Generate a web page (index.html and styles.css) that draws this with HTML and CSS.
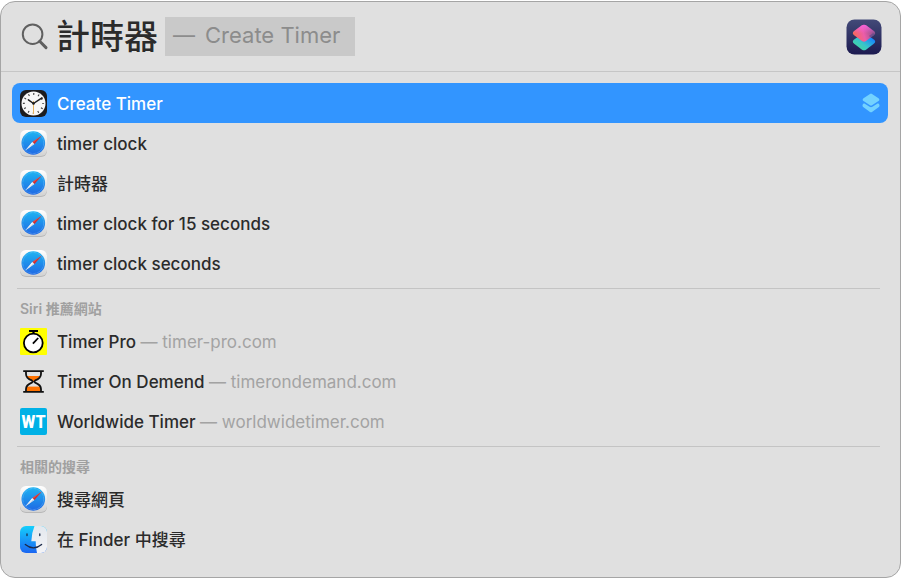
FILE: index.html
```html
<!DOCTYPE html>
<html lang="zh-Hant">
<head>
    <meta charset="UTF-8">
    <meta name="viewport" content="width=device-width, initial-scale=1.0">
    <title>Spotlight</title>
    <link rel="stylesheet" href="styles.css">
</head>
<body>
    <!-- Shared icons -->
    <svg class="sprite" aria-hidden="true">
        <defs>
            <linearGradient id="safari-bg" x1="0" y1="0" x2="0" y2="1">
                <stop offset="0" stop-color="#ffffff"/>
                <stop offset="1" stop-color="#d2d2d2"/>
            </linearGradient>
            <linearGradient id="safari-dial" x1="0" y1="0" x2="0" y2="1">
                <stop offset="0" stop-color="#1fb4f2"/>
                <stop offset="1" stop-color="#1f68e4"/>
            </linearGradient>
            <linearGradient id="finder-left" x1="0" y1="0" x2="0" y2="1">
                <stop offset="0" stop-color="#14cffc"/>
                <stop offset="1" stop-color="#1b66f2"/>
            </linearGradient>
            <linearGradient id="finder-right" x1="0" y1="0" x2="0" y2="1">
                <stop offset="0" stop-color="#e3e8ee"/>
                <stop offset="1" stop-color="#f3f3f6"/>
            </linearGradient>
            <linearGradient id="shortcut-bg" x1="0" y1="0" x2="0" y2="1">
                <stop offset="0" stop-color="#434a78"/>
                <stop offset="1" stop-color="#1c1a50"/>
            </linearGradient>
            <linearGradient id="shortcut-top" x1="0" y1="0.7" x2="1" y2="0.5">
                <stop offset="0" stop-color="#f96a50"/>
                <stop offset="0.5" stop-color="#ec5da8"/>
                <stop offset="1" stop-color="#84508c"/>
            </linearGradient>
            <linearGradient id="shortcut-shine" x1="0" y1="0" x2="0" y2="1">
                <stop offset="0" stop-color="#f562dc"/>
                <stop offset="0.5" stop-color="#f562dc" stop-opacity="0"/>
            </linearGradient>
            <linearGradient id="shortcut-bottom" x1="0.2" y1="1" x2="0.9" y2="0.3">
                <stop offset="0" stop-color="#44d99a"/>
                <stop offset="0.45" stop-color="#39c6c8"/>
                <stop offset="1" stop-color="#1482ff"/>
            </linearGradient>
            <clipPath id="finder-clip"><rect width="27" height="27" rx="6"/></clipPath>
        </defs>
        <symbol id="safari" viewBox="0 0 27 27">
            <rect y="1" width="27" height="26" rx="6" fill="#b8b8b8"/>
            <rect width="27" height="26" rx="6" fill="url(#safari-bg)"/>
            <circle cx="13.3" cy="13" r="11.8" fill="url(#safari-dial)"/>
            <circle cx="13.3" cy="13" r="10.5" fill="none" stroke="#a6daff" stroke-width="0.9" stroke-dasharray="0.6 0.75" opacity="0.6"/>
            <path d="M21.8 5.4 L12.2 11.9 L14.3 14.1 Z" fill="#f0463c"/>
            <path d="M5.2 20.6 L12.2 11.9 L14.3 14.1 Z" fill="#ffffff"/>
            <path d="M21.8 5.4 L13.3 13 L14.3 14.1 Z" fill="#c92d31"/>
            <path d="M5.2 20.6 L13.3 13 L14.3 14.1 Z" fill="#c9d6e6"/>
        </symbol>
    </svg>

    <main class="spotlight">
        <form class="search" role="search">
            <svg class="search-icon" viewBox="0 0 28 28" aria-hidden="true">
                <circle cx="11.6" cy="11.2" r="9.8" fill="none" stroke="#606060" stroke-width="2"/>
                <path d="M18.7 18.3 L25 24.6" stroke="#606060" stroke-width="3" stroke-linecap="round"/>
            </svg>
            <input class="search-input" type="text" value="計時器" aria-label="Spotlight" autocomplete="off">
            <span class="completion"><span>—</span><span>Create Timer</span></span>
            <svg class="app-icon" viewBox="0 0 36 36" aria-hidden="true">
                <rect x="0.5" y="0.5" width="35" height="35" rx="8" fill="url(#shortcut-bg)"/>
                <path d="M8.2 20.4 L16 15.1 Q18 13.8 20 15.1 L27.8 20.4 Q30.6 22.6 27.8 24.8 L20 30.7 Q18 32 16 30.7 L8.2 24.8 Q5.4 22.6 8.2 20.4 Z" fill="url(#shortcut-bottom)"/>
                <path d="M8.2 11.9 L16 6.3 Q18 5 20 6.3 L27.8 11.9 Q30.6 14 27.8 16.2 L20 22.1 Q18 23.4 16 22.1 L8.2 16.2 Q5.4 14 8.2 11.9 Z" fill="url(#shortcut-top)"/>
                <path d="M8.2 11.9 L16 6.3 Q18 5 20 6.3 L27.8 11.9 Q30.6 14 27.8 16.2 L20 22.1 Q18 23.4 16 22.1 L8.2 16.2 Q5.4 14 8.2 11.9 Z" fill="url(#shortcut-shine)"/>
                <path d="M22.9 17.1 L27 14.2 Q29.6 15 27.8 16.2 L25 18.4 Z" fill="#514988" opacity="0.6"/>
            </svg>
        </form>

        <div class="results">
            <ul class="list">
                <li>
                    <a class="row selected" href="#create-timer">
                        <svg class="icon" viewBox="0 0 27 27" aria-hidden="true">
                            <rect width="27" height="27" rx="6" fill="#1c1c1e"/>
                            <circle cx="13.5" cy="13.5" r="12" fill="#f7f7f7"/>
                            <circle cx="13.5" cy="13.5" r="9.6" fill="none" stroke="#3a3a3a" stroke-width="2" stroke-dasharray="1.1 3.926" stroke-dashoffset="0.55"/>
                            <path d="M13.5 11 V24" stroke="#e5b25f" stroke-width="1"/>
                            <path d="M13.5 13.5 L8.4 9.8 M13.5 13.5 L21.9 7.8" stroke="#1c1c1e" stroke-width="1.5" stroke-linecap="round"/>
                            <circle cx="13.5" cy="13.5" r="1.3" fill="#1c1c1e"/>
                        </svg>
                        <span class="name">Create Timer</span>
                        <svg class="layers" viewBox="0 0 18 20" aria-hidden="true">
                            <path d="M1.5 5.3 L8 0.9 Q9 0.2 10 0.9 L16.5 5.3 Q18.2 6.7 16.5 8 L10 12.3 Q9 13 8 12.3 L1.5 8 Q-0.2 6.7 1.5 5.3 Z"/>
                            <path d="M2 10.2 L7.6 13.8 Q9 14.6 10.4 13.8 L16 10.2 Q18.8 12.2 16.5 14.3 L10 18.9 Q9 19.7 8 18.9 L1.5 14.3 Q-0.8 12.2 2 10.2 Z"/>
                        </svg>
                    </a>
                </li>
                <li>
                    <a class="row" href="#timer-clock">
                        <svg class="icon" aria-hidden="true"><use href="#safari"/></svg>
                        <span class="name">timer clock</span>
                    </a>
                </li>
                <li>
                    <a class="row" href="#timer">
                        <svg class="icon" aria-hidden="true"><use href="#safari"/></svg>
                        <span class="name">計時器</span>
                    </a>
                </li>
                <li>
                    <a class="row" href="#timer-clock-15">
                        <svg class="icon" aria-hidden="true"><use href="#safari"/></svg>
                        <span class="name">timer clock for 15 seconds</span>
                    </a>
                </li>
                <li>
                    <a class="row" href="#timer-clock-seconds">
                        <svg class="icon" aria-hidden="true"><use href="#safari"/></svg>
                        <span class="name">timer clock seconds</span>
                    </a>
                </li>
            </ul>

            <h2 class="section-title">Siri 推薦網站</h2>
            <ul class="list">
                <li>
                    <a class="row" href="#timer-pro">
                        <svg class="icon" viewBox="0 0 27 27" aria-hidden="true">
                            <rect width="27" height="27" rx="1" fill="#ffff00"/>
                            <path d="M9 3 H18 M13.5 3 V6" stroke="#000000" stroke-width="2.2"/>
                            <circle cx="13.3" cy="15" r="9.4" fill="#ffffff" stroke="#000000" stroke-width="1.8"/>
                            <path d="M12.9 15.6 L18.2 10" stroke="#000000" stroke-width="1.8"/>
                        </svg>
                        <span class="name">Timer Pro <span class="site">— timer-pro.com</span></span>
                    </a>
                </li>
                <li>
                    <a class="row" href="#timer-on-demend">
                        <svg class="icon" viewBox="0 0 27 27" aria-hidden="true">
                            <path d="M6.5 8 H20.5 Q19 11 15.5 12.2 L13.5 13.4 L11.5 12.2 Q8 11 6.5 8 Z" fill="#ff7200"/>
                            <path d="M6.5 23.5 V18.6 H20.5 V23.5 Z" fill="#ff7200"/>
                            <path d="M6 3.5 V6 Q6 10.2 11.8 12.4 Q13.5 13.6 11.8 14.6 Q6 17 6 21 V23.5 M21 3.5 V6 Q21 10.2 15.2 12.4 Q13.5 13.6 15.2 14.6 Q21 17 21 21 V23.5" fill="none" stroke="#111111" stroke-width="1.8"/>
                            <path d="M3.2 3.2 H23.8 M3.2 23.8 H23.8" stroke="#111111" stroke-width="1.8"/>
                        </svg>
                        <span class="name">Timer On Demend <span class="site">— timerondemand.com</span></span>
                    </a>
                </li>
                <li>
                    <a class="row" href="#worldwide-timer">
                        <span class="icon badge" aria-hidden="true">WT</span>
                        <span class="name">Worldwide Timer <span class="site">— worldwidetimer.com</span></span>
                    </a>
                </li>
            </ul>

            <h2 class="section-title">相關的搜尋</h2>
            <ul class="list">
                <li>
                    <a class="row" href="#search-web">
                        <svg class="icon" aria-hidden="true"><use href="#safari"/></svg>
                        <span class="name">搜尋網頁</span>
                    </a>
                </li>
                <li>
                    <a class="row" href="#search-finder">
                        <svg class="icon" viewBox="0 0 27 27" aria-hidden="true">
                            <g clip-path="url(#finder-clip)">
                                <rect width="27" height="27" fill="url(#finder-left)"/>
                                <path d="M14.5 0 Q11.6 7 11.3 15.2 H15.7 Q15.6 21 17 27 H27 V0 Z" fill="url(#finder-right)"/>
                            </g>
                            <path d="M7 7.9 V9.6 M19.8 7.9 V9.6" stroke="#1b2a4a" stroke-width="1.3" stroke-linecap="round"/>
                            <path d="M5.3 18.4 Q13.5 25.2 21.6 18.4" fill="none" stroke="#1b2a4a" stroke-width="1.3" stroke-linecap="round"/>
                        </svg>
                        <span class="name">在 Finder 中搜尋</span>
                    </a>
                </li>
            </ul>
        </div>
    </main>
</body>
</html>
```
FILE: styles.css
```css
* {
    margin: 0;
    padding: 0;
    box-sizing: border-box;
}

body {
    font-family: Inter, "Noto Sans CJK TC", sans-serif;
    font-size: 17px;
    color: #2b2b2b;
    background-color: #ffffff;
    padding: 1px 3px 2px 0;
}

.sprite {
    position: absolute;
    width: 0;
    height: 0;
}

.spotlight {
    border: 1px solid #a5a5a5;
    border-radius: 15px;
    background-color: #e0e0e0;
    overflow: hidden;
}

/* Search bar */
.search {
    display: flex;
    align-items: center;
    height: 70px;
    padding: 0 18px 0 20px;
    border-bottom: 1px solid #c6c6c6;
}

.search-icon {
    flex: none;
    width: 28px;
    height: 28px;
}

.search-input {
    width: 112px;
    height: 48px;
    padding: 0 0 4px 7px;
    border: none;
    outline: none;
    background: none;
    color: #2b2b2b;
    font-family: "Noto Sans CJK TC", sans-serif;
    font-size: 34px;
    font-weight: 500;
}

.completion {
    display: flex;
    align-items: center;
    gap: 10px;
    height: 39px;
    margin-left: 4px;
    padding: 0 15px 3px 8px;
    background-color: #c9c9c9;
    color: #8c8c8c;
    font-size: 22px;
    white-space: nowrap;
}

.app-icon {
    flex: none;
    width: 36px;
    height: 36px;
    margin-left: auto;
}

/* Results */
.results {
    padding: 11px 12px 18px 11px;
}

.list {
    list-style-type: none;
}

.row {
    display: flex;
    align-items: center;
    gap: 10px;
    height: 40px;
    padding: 0 8px;
    border-radius: 8px;
    color: inherit;
    text-decoration: none;
}

.row.selected {
    background-color: #3295ff;
    color: #ffffff;
}

.icon {
    flex: none;
    width: 27px;
    height: 27px;
}

.name {
    flex: 1;
    padding-top: 2px;
    line-height: 24px;
    font-weight: 500;
}

.site {
    color: #a3a3a3;
    font-weight: 400;
}

.layers {
    width: 18px;
    height: 20px;
    fill: #73d2ff;
}

.badge {
    border-radius: 2px;
    background-color: #00b1e6;
    color: #ffffff;
    font-family: "Liberation Sans Narrow", "Roboto Condensed", Roboto, sans-serif;
    font-size: 19px;
    font-weight: 700;
    line-height: 27px;
    text-align: center;
}

.section-title {
    margin: 5px 8px 0 5px;
    padding: 10px 3px 2px;
    border-top: 1px solid #c4c4c4;
    color: #a0a0a0;
    font-size: 14px;
    font-weight: 600;
    line-height: 20px;
}
```
